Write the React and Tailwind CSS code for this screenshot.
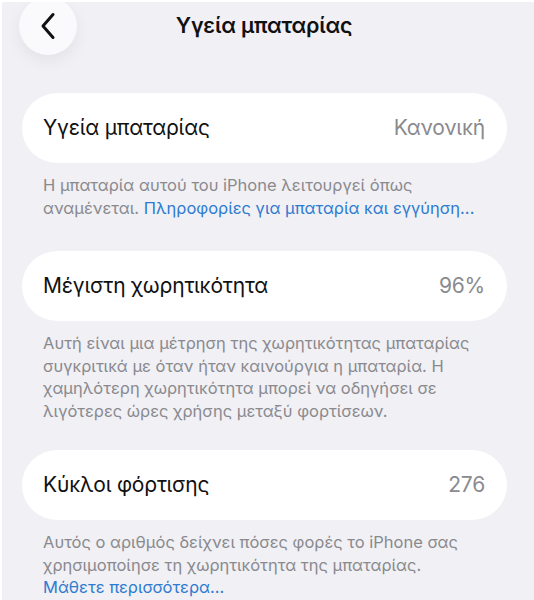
import React from "react";

const font = { fontFamily: "Inter, 'Noto Sans', sans-serif" };

function Row({ label, value }) {
  return (
    <div className="ml-[20px] mr-[27px] flex h-[70px] items-center justify-between rounded-full bg-white pl-[21px] pr-[22px]">
      <span className="text-[21px] tracking-[-0.2px] text-[#111]">{label}</span>
      <span className="text-[21px] tracking-[-0.2px] text-[#8a8a8e]">{value}</span>
    </div>
  );
}

function Note({ children }) {
  return (
    <p className="mt-[11px] pl-[41px] pr-[50px] text-[16.5px] leading-[22.5px] text-[#8a8a8e]">
      {children}
    </p>
  );
}

export default function App() {
  return (
    <div
      className="h-[600px] w-[534px] overflow-hidden border-l-2 border-t-2 border-white bg-[#f0f0f5]"
      style={font}
    >
      <header className="relative h-[91px]">
        <button className="absolute left-[17px] top-[-5px] flex h-[58px] w-[58px] items-center justify-center rounded-full bg-[#fafafc] shadow-[0_6px_16px_rgba(0,0,0,0.06)]">
          <svg width="18" height="28" viewBox="0 0 18 28" fill="none">
            <path d="M14 2.5 L4 14 L14 25.5" stroke="#111" strokeWidth="3" strokeLinecap="round" strokeLinejoin="round" />
          </svg>
        </button>
        <h1 className="pt-[7px] pr-[8px] text-center text-[21.5px] font-semibold tracking-[-0.2px] text-[#111]">
          Υγεία μπαταρίας
        </h1>
      </header>

      <Row label="Υγεία μπαταρίας" value="Κανονική" />
      <Note>
        Η μπαταρία αυτού του iPhone λειτουργεί όπως αναμένεται.{" "}
        <span className="text-[#2f7bd0]">Πληροφορίες για μπαταρία και εγγύηση...</span>
      </Note>

      <div className="mt-[32px]">
        <Row label="Μέγιστη χωρητικότητα" value="96%" />
      </div>
      <Note>
        Αυτή είναι μια μέτρηση της χωρητικότητας μπαταρίας συγκριτικά με όταν ήταν καινούργια η μπαταρία. Η χαμηλότερη χωρητικότητα μπορεί να οδηγήσει σε λιγότερες ώρες χρήσης μεταξύ φορτίσεων.
      </Note>

      <div className="mt-[28px]">
        <Row label="Κύκλοι φόρτισης" value="276" />
      </div>
      <Note>
        Αυτός ο αριθμός δείχνει πόσες φορές το iPhone σας χρησιμοποίησε τη χωρητικότητα της μπαταρίας.{" "}
        <span className="block text-[#2f7bd0]">Μάθετε περισσότερα...</span>
      </Note>
    </div>
  );
}
